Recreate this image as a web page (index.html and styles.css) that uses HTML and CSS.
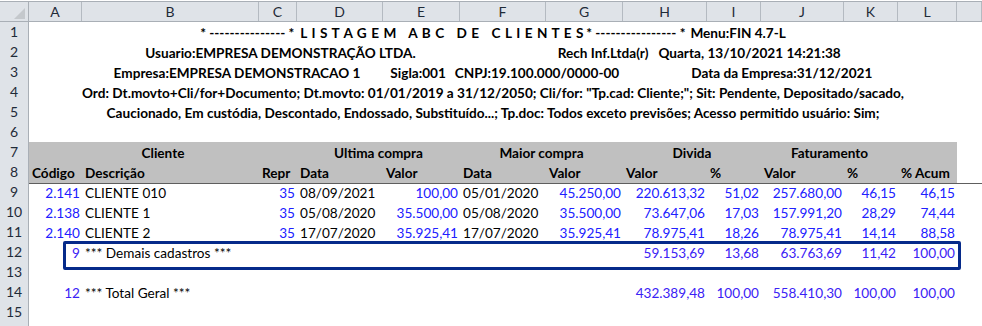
FILE: index.html
```html
<!DOCTYPE html>
<html lang="pt">
<head>
<meta charset="utf-8">
<title>Listagem ABC de Clientes</title>
<link rel="stylesheet" href="styles.css">
</head>
<body>
<div class="sheet">
  <div class="row hdr">
    <div class="corner"><svg width="11" height="11" viewBox="0 0 11 11"><polygon points="11,0 11,11 0,11" fill="#c4c8cc"/></svg></div>
    <div class="ch">A</div><div class="ch">B</div><div class="ch">C</div><div class="ch">D</div><div class="ch">E</div><div class="ch">F</div><div class="ch">G</div><div class="ch">H</div><div class="ch">I</div><div class="ch">J</div><div class="ch">K</div><div class="ch">L</div><div class="ch"></div>
  </div>

  <div class="row">
    <div class="rh">1</div>
    <div class="merged b line1"><span class="dash">* --------------- *</span><span class="title">L I S T A G E M   A B C   D E   C L I E N T E S</span><span class="dash">* ---------------- *</span><span class="menu">Menu:FIN 4.7-L</span></div>
    <div></div>
  </div>
  <div class="row">
    <div class="rh">2</div>
    <div class="merged b"><span>Usuario:EMPRESA DEMONSTRAÇÃO LTDA.</span><span class="gap2a">Rech Inf.Ltda(r)</span><span class="gap2b">Quarta, 13/10/2021 14:21:38</span></div>
    <div></div>
  </div>
  <div class="row">
    <div class="rh">3</div>
    <div class="merged b"><span>Empresa:EMPRESA DEMONSTRACAO 1</span><span class="gap3a">Sigla:001</span><span class="gap3b">CNPJ:19.100.000/0000-00</span><span class="gap3c">Data da Empresa:31/12/2021</span></div>
    <div></div>
  </div>
  <div class="row">
    <div class="rh">4</div>
    <div class="merged b">Ord: Dt.movto+Cli/for+Documento; Dt.movto: 01/01/2019 a 31/12/2050; Cli/for: "Tp.cad: Cliente;"; Sit: Pendente, Depositado/sacado,</div>
    <div></div>
  </div>
  <div class="row">
    <div class="rh">5</div>
    <div class="merged b">Caucionado, Em custódia, Descontado, Endossado, Substituído...; Tp.doc: Todos exceto previsões; Acesso permitido usuário: Sim;</div>
    <div></div>
  </div>
  <div class="row">
    <div class="rh">6</div>
  </div>

  <div class="row grp">
    <div class="rh">7</div>
    <div class="c ctr b span3">Cliente</div>
    <div class="c ctr b span2">Ultima compra</div>
    <div class="c ctr b span2">Maior compra</div>
    <div class="c ctr b span2">Divida</div>
    <div class="c ctr b span2">Faturamento</div>
    <div class="c"></div>
    <div></div>
  </div>
  <div class="row grp freeze">
    <div class="rh">8</div>
    <div class="c b">Código</div>
    <div class="c b">Descrição</div>
    <div class="c b">Repr</div>
    <div class="c b">Data</div>
    <div class="c b">Valor</div>
    <div class="c b">Data</div>
    <div class="c b">Valor</div>
    <div class="c b">Valor</div>
    <div class="c b">%</div>
    <div class="c b">Valor</div>
    <div class="c b">%</div>
    <div class="c b">% Acum</div>
    <div></div>
  </div>

  <div class="row">
    <div class="rh">9</div>
    <div class="c n">2.141</div><div class="c">CLIENTE 010</div><div class="c n">35</div><div class="c">08/09/2021</div><div class="c n">100,00</div><div class="c">05/01/2020</div><div class="c n">45.250,00</div><div class="c n">220.613,32</div><div class="c n">51,02</div><div class="c n">257.680,00</div><div class="c n">46,15</div><div class="c n">46,15</div><div></div>
  </div>
  <div class="row">
    <div class="rh">10</div>
    <div class="c n">2.138</div><div class="c">CLIENTE 1</div><div class="c n">35</div><div class="c">05/08/2020</div><div class="c n">35.500,00</div><div class="c">05/08/2020</div><div class="c n">35.500,00</div><div class="c n">73.647,06</div><div class="c n">17,03</div><div class="c n">157.991,20</div><div class="c n">28,29</div><div class="c n">74,44</div><div></div>
  </div>
  <div class="row">
    <div class="rh">11</div>
    <div class="c n">2.140</div><div class="c">CLIENTE 2</div><div class="c n">35</div><div class="c">17/07/2020</div><div class="c n">35.925,41</div><div class="c">17/07/2020</div><div class="c n">35.925,41</div><div class="c n">78.975,41</div><div class="c n">18,26</div><div class="c n">78.975,41</div><div class="c n">14,14</div><div class="c n">88,58</div><div></div>
  </div>
  <div class="row">
    <div class="rh">12</div>
    <div class="c n t">9</div><div class="c">*** Demais cadastros ***</div><div class="c"></div><div class="c"></div><div class="c"></div><div class="c"></div><div class="c"></div><div class="c n t">59.153,69</div><div class="c n t">13,68</div><div class="c n t">63.763,69</div><div class="c n t">11,42</div><div class="c n t">100,00</div><div></div>
  </div>
  <div class="row">
    <div class="rh">13</div>
  </div>
  <div class="row">
    <div class="rh">14</div>
    <div class="c n t">12</div><div class="c">*** Total Geral ***</div><div class="c"></div><div class="c"></div><div class="c"></div><div class="c"></div><div class="c"></div><div class="c n t">432.389,48</div><div class="c n t">100,00</div><div class="c n t">558.410,30</div><div class="c n t">100,00</div><div class="c n t">100,00</div><div></div>
  </div>
  <div class="row">
    <div class="rh">15</div>
  </div>
  <div class="row">
    <div class="rh"></div>
  </div>

  <div class="shape" aria-hidden="true"></div>
</div>
</body>
</html>
```

FILE: styles.css
```css
* { box-sizing: border-box; }

html, body {
  margin: 0;
  padding: 0;
  background: #ffffff;
}

body {
  font-family: Lato, "Liberation Sans", sans-serif;
  font-size: 13.6px;
  color: #000000;
  overflow: hidden;
}

.sheet {
  position: relative;
  width: 982px;
  height: 326px;
  overflow: hidden;
}

.row {
  display: grid;
  grid-template-columns: 29px 53px 177px 38px 86px 77px 86px 77px 84px 54px 83px 54px 59px 1fr;
  height: 20px;
  line-height: 20px;
}

.row.hdr {
  margin-top: 1px;
  height: 21px;
  line-height: 19px;
  border-top: 1px solid #a9afb6;
  border-bottom: 1px solid #a9afb6;
  background: #dfe3e8;
  font-size: 14px;
}

.corner {
  position: relative;
  border-right: 1px solid #a9afb6;
  display: flex;
  align-items: flex-end;
  justify-content: flex-end;
  padding: 0 3px 2px 0;
}

.corner svg { display: block; }

.ch {
  text-align: center;
  color: #1f2b38;
  border-right: 1px solid #b4bac1;
}

.rh {
  background: #dfe3e8;
  border-right: 1px solid #a9afb6;
  border-bottom: 1px solid #c4cad1;
  text-align: center;
  color: #1f2b38;
  font-size: 14px;
}

.merged {
  grid-column: 2 / 14;
  display: flex;
  justify-content: center;
  white-space: pre;
  padding-top: 1px;
}

.b { font-weight: 700; }

.dash { letter-spacing: 0; }
.title { letter-spacing: 0.6px; margin: 0 2px 0 6px; }
.menu { margin-left: 5px; }
.gap2a { margin-left: 142px; }
.gap2b { margin-left: 10px; }
.gap3a { margin-left: 30px; }
.gap3b { margin-left: 9px; }
.gap3c { margin-left: 72px; }

.c {
  padding: 1px 3px 0 3px;
  white-space: nowrap;
  overflow: visible;
}

.c.n {
  text-align: right;
  color: #2020ff;
  padding-right: 2px;
}

.c.n.t { color: #3a22f5; }

.ctr { text-align: center; }
.span3 { grid-column: span 3; }
.span2 { grid-column: span 2; }

.row.grp > .c { background: #c0c0c0; }

.row.freeze > * { border-bottom: 1px solid #5e5e5e; }

.shape {
  position: absolute;
  left: 63px;
  top: 241px;
  width: 898px;
  height: 29px;
  border: 3px solid #062a8a;
  border-radius: 2px;
}
```
